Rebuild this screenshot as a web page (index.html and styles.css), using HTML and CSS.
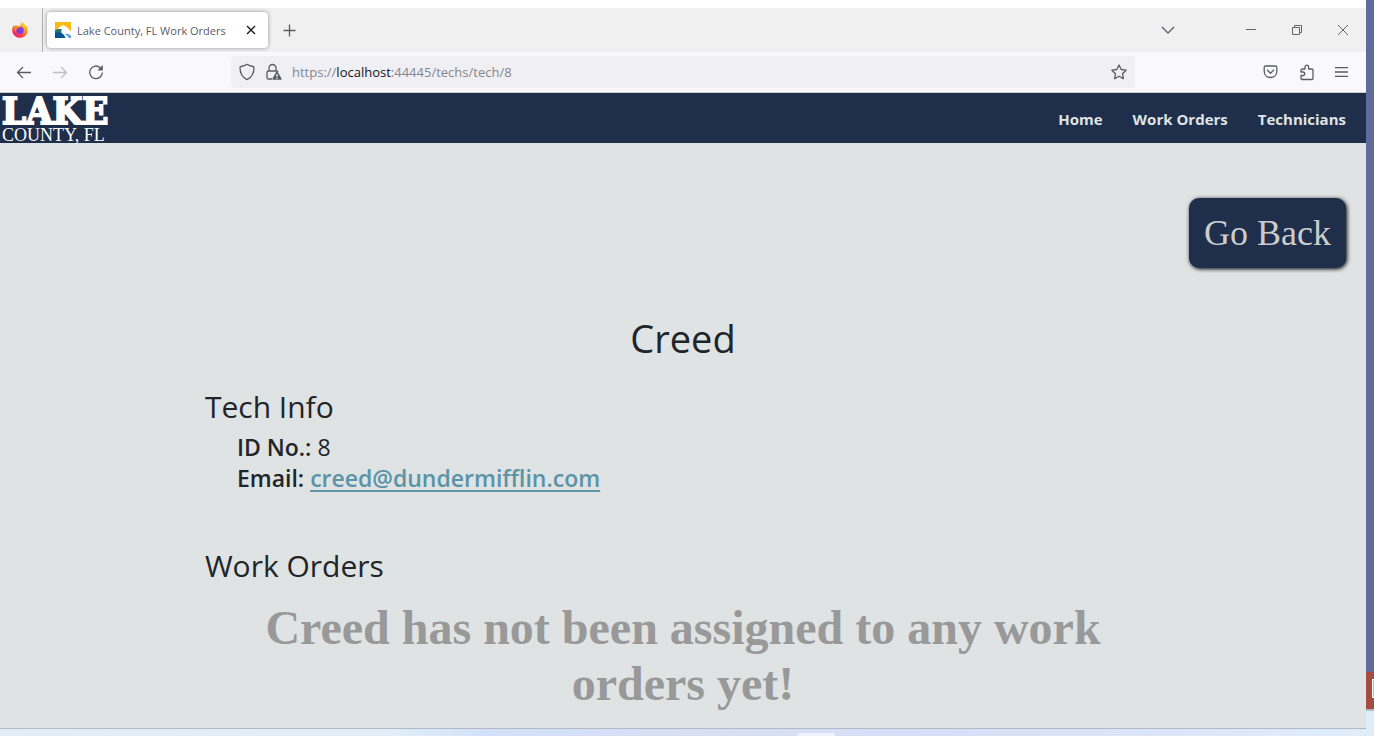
FILE: index.html
```html
<!DOCTYPE html>
<html lang="en">
<head>
<meta charset="utf-8">
<title>Lake County, FL Work Orders</title>
<link rel="stylesheet" href="styles.css">
</head>
<body>
<div class="desktop">
  <div class="browser">
    <div class="tabbar">
      <div class="pinned">
        <svg width="18" height="18" viewBox="0 0 18 18" aria-label="Firefox">
          <defs>
            <linearGradient id="flame" x1="0.9" y1="0" x2="0.2" y2="1"><stop offset="0" stop-color="#fff04a"/><stop offset="0.4" stop-color="#ff9a1f"/><stop offset="0.75" stop-color="#ff3b47"/><stop offset="1" stop-color="#e31587"/></linearGradient>
          </defs>
          <path fill="url(#flame)" d="M11 1c2 1 3 2.500 3.500 4l.8-.6C16.500 6 17 8 16.700 10c-.6 4-3.800 6.800-7.700 6.800S1.500 13.900 1.200 10C1 7.500 2 5.500 3 4.300l.4 1.200c1-1.300 2.100-1.600 2.100-1.600l.2 1.200c1.200-.4 2.500-.1 3.500.3C9.400 3.500 10 2 11 1z"/>
          <circle cx="9" cy="9.500" r="3.700" fill="#7a3fe0"/>
          <path fill="#ff8a1d" d="M3.500 6c2-1 4.500-.8 6 .5-1.800.2-3.500.5-3.600 1.500C5 9 4.500 10 5 11.500 3.500 10 3 8 3.500 6z"/>
        </svg>
      </div>
      <div class="tab">
        <svg width="16" height="16" viewBox="0 0 16 16" aria-hidden="true">
          <path fill="#fdb813" d="M0 0h16v8H0z"/>
          <path fill="#fff" d="M8 8h8v8H8z"/>
          <path fill="#1d7a70" d="M0 8l5-1.500L9 8l-1 3.500H0z"/>
          <path fill="#00558c" d="M0 10.500c3-.5 6-.2 8 1.500 1 1 2 2.500 2.500 4H0z"/>
          <path fill="#fff" d="M3 6.500c1.500-.5 2-2.500 4-3C8.500 3 9.500 3.200 10 4.200 12.500 5 14 7 15 9l-2.500 1-3 2c-1.500 0-3-.7-3.500-2l1-2.500L5.500 7 3 7z"/>
          <path fill="#fdb813" d="M16 6v3l-2-1.500z"/>
          <path fill="#5c9be0" d="M9.500 12c2.500-.8 5 0 6.500 2v2h-2c-1-2-2.500-3-4.500-4z"/>
        </svg>
        <span class="tab-title">Lake County, FL Work Orders</span>
        <button class="icon-btn dark" aria-label="Close tab"><svg width="10" height="10" viewBox="0 0 10 10"><path d="M1 1l8 8M9 1L1 9"/></svg></button>
      </div>
      <button class="icon-btn newtab" aria-label="New tab"><svg width="13" height="13" viewBox="0 0 13 13"><path d="M6.500 0.500v12M0.500 6.500h12"/></svg></button>
      <div class="window-controls">
        <button class="icon-btn list-tabs" aria-label="List all tabs"><svg width="14" height="8" viewBox="0 0 14 8"><path d="M1 1l6 6 6-6"/></svg></button>
        <button class="icon-btn control" aria-label="Minimize"><svg width="10" height="10" viewBox="0 0 10 10"><path d="M0 4.500h10"/></svg></button>
        <button class="icon-btn control" aria-label="Restore"><svg width="10" height="10" viewBox="0 0 10 10"><path d="M0.500 2.500h7v7h-7zM2.500 2.500v-2h7v7h-2"/></svg></button>
        <button class="icon-btn control" aria-label="Close"><svg width="10" height="10" viewBox="0 0 10 10"><path d="M0 0l10 10M10 0L0 10"/></svg></button>
      </div>
    </div>
    <div class="toolbar">
      <div class="history">
        <button class="icon-btn" aria-label="Back"><svg width="16" height="16" viewBox="0 0 16 16"><path d="M15 8.500H1.500M7 3L1.500 8.500 7 14"/></svg></button>
        <button class="icon-btn faded" aria-label="Forward"><svg width="16" height="16" viewBox="0 0 16 16"><path d="M1 8.500h13.500M9 3l5.500 5.500L9 14"/></svg></button>
        <button class="icon-btn" aria-label="Reload"><svg width="16" height="16" viewBox="0 0 16 16"><path d="M14.300 8.500a6.300 6.300 0 1 1-2-4.800l1 1"/><path class="solid" d="M14.800 1v5.500H9.300z"/></svg></button>
      </div>
      <div class="urlbar">
        <svg class="line" width="16" height="18" viewBox="0 0 16 18"><path d="M8 1.300c2 1.400 4 1.900 6 2.200.7 0 1 .5 1 1 0 5-1.500 9.500-7 12.200C2.500 14 1 9.500 1 4.500c0-.5.300-1 1-1 2-.3 4-.8 6-2.200z"/></svg>
        <svg class="line" width="17" height="18" viewBox="0 0 17 18"><path d="M4 8V5a3.500 3.500 0 0 1 7 0v3M7 16H3.500C2.500 16 2 15.400 2 14.500V9.500C2 8.500 2.500 8 3.500 8h8c.8 0 1.300.3 1.500 1"/><path class="solid" d="M12 8.500c.4 0 .6.200.8.500l3.700 6.500c.3.600 0 1.300-.6 1.300H8.100c-.6 0-.9-.7-.6-1.300L11.200 9c.2-.3.400-.5.800-.5z"/><path class="mark" d="M12 11v3M12 14.800v1.200"/></svg>
        <span class="url">https://<b>localhost</b>:44445/techs/tech/8</span>
        <button class="icon-btn star" aria-label="Bookmark"><svg width="16" height="16" viewBox="0 0 16 16"><path d="M8 1l2.200 4.500 4.900.7-3.600 3.500.9 5L8 12.300l-4.400 2.400.9-5L.9 6.200l4.900-.7z"/></svg></button>
      </div>
      <div class="tools">
        <button class="icon-btn" aria-label="Save to Pocket"><svg width="16" height="14" viewBox="0 0 16 14"><path d="M2.500 1h10c.8 0 1.300.5 1.300 1.300V6c0 4-2.700 6.500-6.300 6.500S1.200 10 1.200 6V2.300C1.200 1.500 1.700 1 2.500 1zM4 4.800l3.500 3.400L11 4.800"/></svg></button>
        <button class="icon-btn" aria-label="Extensions"><svg width="16" height="17" viewBox="0 0 16 17"><path d="M3 15.500c-.8 0-1-.4-1-1v-3h2a1.700 1.700 0 0 0 0-3.500H2V6.500C2 5.500 2.500 5 3.500 5H6V3a1.800 1.800 0 0 1 3.600 0v2h3.200c.8 0 1.200.5 1.200 1.200v8.300c0 .6-.3 1-1 1z"/></svg></button>
        <button class="icon-btn" aria-label="Menu"><svg width="13" height="10" viewBox="0 0 13 10"><path d="M0 .5h13M0 5h13M0 9.500h13"/></svg></button>
      </div>
    </div>
    <div class="page">
      <header class="site-header">
        <a class="logo" href="#"><span class="logo-name">LAKE</span><span class="logo-sub">COUNTY, FL</span></a>
        <nav class="site-nav">
          <a href="#">Home</a>
          <a href="#">Work Orders</a>
          <a href="#">Technicians</a>
        </nav>
      </header>
      <main class="content">
        <div class="actions"><button class="go-back">Go Back</button></div>
        <h1>Creed</h1>
        <div class="column">
          <section>
            <h2>Tech Info</h2>
            <div class="details">
              <div><b>ID No.:</b> 8</div>
              <div><b>Email: <a href="#">creed@dundermifflin.com</a></b></div>
            </div>
          </section>
          <section>
            <h2>Work Orders</h2>
            <p class="empty">Creed has not been assigned to any work orders yet!</p>
          </section>
        </div>
      </main>
    </div>
  </div>
  <div class="side">
    <div class="side-blue"></div>
    <div class="side-red"><i></i></div>
    <div class="side-sky"></div>
  </div>
</div>
<div class="taskbar"><i></i></div>
</body>
</html>
```
FILE: styles.css
```css
* { box-sizing: border-box; }

body {
  margin: 0;
  height: 100vh;
  display: flex;
  flex-direction: column;
  overflow: hidden;
  font-family: "Open Sans", "Noto Sans", sans-serif;
  color: #212529;
}

.desktop { flex: 1; min-height: 0; display: flex; }

.browser {
  flex: 1;
  min-width: 0;
  display: flex;
  flex-direction: column;
  border-top: 8px solid #fff;
  border-bottom: 1px solid #b2b8c4;
}

button { font: inherit; border: 0; padding: 0; background: none; }

.icon-btn { display: flex; align-items: center; justify-content: center; }

svg { flex: none; }

.icon-btn path, .line path {
  fill: none;
  stroke: #5b5b66;
  stroke-width: 1.3;
  stroke-linejoin: round;
}

.icon-btn .solid, .line .solid { fill: #5b5b66; stroke: none; }
.line .mark { stroke: #f0f0f4; }
.dark path { stroke: #15141a; }
.faded path { stroke: #bfbfc5; }
.control path { stroke: #666; stroke-width: 1; }

/* Tab strip */
.tabbar { display: flex; flex: none; height: 44px; background: #f0f0f0; }

.pinned {
  width: 43px;
  padding-right: 2px;
  display: flex;
  align-items: center;
  justify-content: center;
  border-right: 1px solid #b0b0b0;
}

.tab {
  display: flex;
  align-items: center;
  gap: 6px;
  width: 221px;
  margin: 4px;
  padding: 0 12px 0 8px;
  border-radius: 4px;
  background: #fff;
  box-shadow: 0 0 4px rgba(0, 0, 0, 0.4);
}

.tab-title { flex: 1; font-size: 11px; color: #5b5b66; white-space: nowrap; }
.newtab { width: 34px; }
.window-controls { display: flex; margin-left: auto; }
.list-tabs { width: 40px; margin-right: 40px; }
.control { width: 46px; }

/* Address row */
.toolbar {
  display: grid;
  grid-template-columns: 231px 1fr 231px;
  flex: none;
  height: 41px;
  background: #f9f9fb;
  border-bottom: 1px solid #ccc;
}

.history { display: flex; gap: 20px; padding-left: 16px; }
.tools { display: flex; gap: 20px; justify-content: flex-end; padding-right: 18px; }

.urlbar {
  display: flex;
  align-items: center;
  gap: 10px;
  margin: 4px 0;
  padding: 0 8px;
  border-radius: 4px;
  background: #f0f0f4;
}

.url { font-size: 13px; color: #85858c; }
.url b { font-weight: 400; color: #15141a; }
.star { margin-left: auto; }

/* Page */
.page { flex: 1; min-height: 0; overflow: hidden; background: #dfe3e4; }

.site-header {
  display: flex;
  align-items: center;
  justify-content: space-between;
  height: 50px;
  padding: 0 20px 0 2px;
  background: #1f2e4a;
}

.logo {
  display: flex;
  flex-direction: column;
  color: #fff;
  text-decoration: none;
  white-space: nowrap;
}

.logo-name {
  font: bold 38px/35px "DejaVu Serif Condensed", "DejaVu Serif", serif;
  -webkit-text-stroke: 2px #fff;
}

.logo-sub { font: 18px/15px "Liberation Serif", serif; }

.site-nav { display: flex; gap: 30px; padding-top: 1px; }
.site-nav a { font-size: 15px; font-weight: 700; color: #dfe3e4; text-decoration: none; }

.actions { display: flex; justify-content: flex-end; padding: 55px 20px 46px; }

.go-back {
  height: 70px;
  padding: 0 15px;
  border-radius: 10px;
  background: #1f2e4a;
  color: #ccc;
  font: 36px/40px "Liberation Serif", serif;
  box-shadow: 1px 1px 4px #000;
}

h1 { margin: 0 0 26px; font-size: 38px; line-height: 48px; font-weight: 400; text-align: center; }
h2 { margin: 0; font-size: 30px; line-height: 38px; font-weight: 400; }

.column { width: 70%; margin: 0 auto; }

.details { padding: 6px 32px 53px; font-size: 23px; line-height: 31px; }
.details b { font-weight: 600; }
.details a { color: #5b93a7; text-decoration-thickness: 2px; text-underline-offset: 3px; }

.empty {
  margin: 15px 0 0;
  font: bold 48px/56px "Liberation Serif", serif;
  color: #999;
  text-align: center;
}

/* Desktop edges behind the window */
.side { flex: none; width: 8px; display: flex; flex-direction: column; }
.side-blue { flex: 1; background: #5f6c9b; }

.side-red {
  height: 39px;
  padding: 7px 0 0 6px;
  background: #a64b42;
  border-bottom: 2px solid #b2b8c4;
}

.side-red i { display: block; height: 19px; border: 1px solid #fff; border-right: 0; background: #bbb; }
.side-sky { height: 18px; background: #e0edf9; }

.taskbar {
  flex: none;
  display: flex;
  justify-content: center;
  align-items: flex-end;
  height: 7px;
  padding-left: 258px;
  background: linear-gradient(90deg, #e0edf7 0, #e2eff8 28%, #d2e2fa 35%, #d7def5 50%, #d6e0f8 70%, #e0edf9 100%);
}

.taskbar i { width: 37px; height: 3px; border-radius: 2px 2px 0 0; background: #f0f3fc; }
```
